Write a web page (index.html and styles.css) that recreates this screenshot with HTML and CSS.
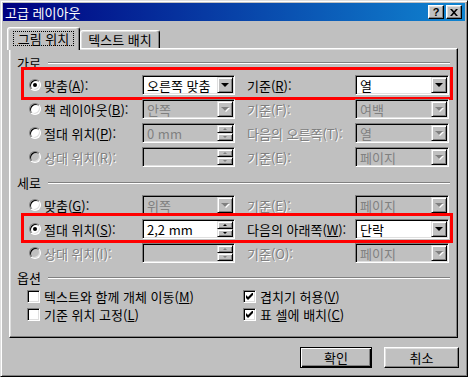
FILE: index.html
```html
<!DOCTYPE html>
<html lang="ko">
    <head>
        <meta charset="UTF-8">
        <title>고급 레이아웃</title>
        <link rel="stylesheet" href="styles.css">
    </head>
    <body>
        <div class="win">
            <div class="title">
                <span>고급 레이아웃</span>
                <div class="tbtns">
                    <div class="tbtn q">?</div>
                    <div class="tbtn">
                        <svg width="8" height="7" viewBox="0 0 8 7"><path d="M0 0h2l2 2.2L6 0h2L5 3.5 8 7H6L4 4.8 2 7H0l3-3.5z" fill="#000"/></svg>
                    </div>
                </div>
            </div>
            <div class="body">
                <div class="tabs">
                    <div class="tab on"><span class="focus">그림 위치</span></div>
                    <div class="tab">텍스트 배치</div>
                </div>
                <div class="panel">
                    <!-- 가로 -->
                    <div class="grp"><span>가로</span><i></i></div>
                    <div class="rows">
                        <div class="row hl hl1">
                            <div class="lbl"><span class="radio on"></span>맞춤(<u>A</u>):</div>
                            <div class="combo"><span class="val">오른쪽 맞춤</span><span class="drop"><b></b></span></div>
                            <div class="lbl2">기준(<u>R</u>):</div>
                            <div class="combo c2"><span class="val">열</span><span class="drop"><b></b></span></div>
                        </div>
                        <div class="row">
                            <div class="lbl"><span class="radio"></span>책 레이아웃(<u>B</u>):</div>
                            <div class="combo dis"><span class="val">안쪽</span><span class="drop"><b></b></span></div>
                            <div class="lbl2 gray">기준(F):</div>
                            <div class="combo c2 dis"><span class="val">여백</span><span class="drop"><b></b></span></div>
                        </div>
                        <div class="row">
                            <div class="lbl"><span class="radio"></span>절대 위치(<u>P</u>):</div>
                            <div class="combo dis"><span class="val">0 mm</span><span class="spin"><span class="up"><b></b></span><span class="dn"><b></b></span></span></div>
                            <div class="lbl2 gray">다음의 오른쪽(T):</div>
                            <div class="combo c2 dis"><span class="val">열</span><span class="drop"><b></b></span></div>
                        </div>
                        <div class="row">
                            <div class="lbl gray"><span class="radio dis"></span>상대 위치(R):</div>
                            <div class="combo dis"><span class="val"></span><span class="spin"><span class="up"><b></b></span><span class="dn"><b></b></span></span></div>
                            <div class="lbl2 gray">기준(E):</div>
                            <div class="combo c2 dis"><span class="val">페이지</span><span class="drop"><b></b></span></div>
                        </div>
                    </div>

                    <!-- 세로 -->
                    <div class="grp g2"><span>세로</span><i></i></div>
                    <div class="rows">
                        <div class="row">
                            <div class="lbl"><span class="radio"></span>맞춤(<u>G</u>):</div>
                            <div class="combo dis"><span class="val">위쪽</span><span class="drop"><b></b></span></div>
                            <div class="lbl2 gray">기준(E):</div>
                            <div class="combo c2 dis"><span class="val">페이지</span><span class="drop"><b></b></span></div>
                        </div>
                        <div class="row hl hl2">
                            <div class="lbl"><span class="radio on"></span>절대 위치(<u>S</u>):</div>
                            <div class="combo"><span class="val">2,2 mm</span><span class="spin"><span class="up"><b></b></span><span class="dn"><b></b></span></span></div>
                            <div class="lbl2">다음의 아래쪽(<u>W</u>):</div>
                            <div class="combo c2"><span class="val">단락</span><span class="drop"><b></b></span></div>
                        </div>
                        <div class="row">
                            <div class="lbl gray"><span class="radio dis"></span>상대 위치(I):</div>
                            <div class="combo dis"><span class="val"></span><span class="spin"><span class="up"><b></b></span><span class="dn"><b></b></span></span></div>
                            <div class="lbl2 gray">기준(O):</div>
                            <div class="combo c2 dis"><span class="val">페이지</span><span class="drop"><b></b></span></div>
                        </div>
                    </div>

                    <!-- 옵션 -->
                    <div class="grp g3"><span>옵션</span><i></i></div>
                    <div class="opts">
                        <div class="opt"><span class="chk"></span>텍스트와 함께 개체 이동(<u>M</u>)</div>
                        <div class="opt"><span class="chk on"><svg width="7" height="7" viewBox="0 0 7 7"><path d="M0 2v3l2 2 5-5V-1L2 4z" fill="#000"/></svg></span>겹치기 허용(<u>V</u>)</div>
                        <div class="opt"><span class="chk"></span>기준 위치 고정(<u>L</u>)</div>
                        <div class="opt"><span class="chk on"><svg width="7" height="7" viewBox="0 0 7 7"><path d="M0 2v3l2 2 5-5V-1L2 4z" fill="#000"/></svg></span>표 셀에 배치(<u>C</u>)</div>
                    </div>
                </div>
                <div class="btns">
                    <button class="btn def">확인</button>
                    <button class="btn">취소</button>
                </div>
            </div>
        </div>
    </body>
</html>
```

FILE: styles.css
```css
:root{
    --face: #c0c0c0;
    --shadow: #808080;
    --light: #dfdfdf;
}
*{
    margin: 0;
    padding: 0;
    box-sizing: border-box;
}
body{
    font: 13px/15px "Noto Sans CJK KR", "Liberation Sans", sans-serif;
    color: #000;
    background: var(--face);
}
u{text-decoration: underline; text-underline-offset: 1px;}

/* window frame */
.win{
    width: 468px; height: 377px;
    background: var(--face);
    border: 1px solid; border-color: var(--light) #000 #000 var(--light);
    box-shadow: inset 1px 1px #fff, inset -1px -1px var(--shadow);
    padding: 2px;
}
.title{
    height: 18px;
    background: linear-gradient(90deg, #000080, #1084d0);
    color: #fff;
    display: flex; align-items: center; justify-content: space-between;
    padding: 0 3px 0 2px;
}
.tbtns{display: flex; gap: 2px;}
.tbtn{
    width: 16px; height: 14px;
    background: var(--face);
    border: 1px solid; border-color: #fff #000 #000 #fff;
    box-shadow: inset -1px -1px var(--shadow), inset 1px 1px var(--light);
    display: flex; align-items: center; justify-content: center;
}
.tbtn.q{font: bold 11px/12px "Liberation Sans", sans-serif; color: #000;}

.body{padding: 6px 7px 0 6px;}

/* tabs */
.tabs{display: flex; align-items: flex-end; height: 21px; margin-left: -2px; position: relative; z-index: 1;}
.tab{
    width: 80px; height: 18px;
    border: 1px solid; border-bottom: none;
    border-color: #fff #000 transparent #fff;
    box-shadow: inset -1px 0 var(--shadow), inset 1px 1px var(--light);
    border-radius: 3px 3px 0 0;
    display: flex; align-items: center; justify-content: center;
    background: var(--face);
}
.tab.on{width: 73px; height: 23px; margin-bottom: -2px; padding-bottom: 2px;}
.focus{border: 1px dotted #000; padding: 0 4px; line-height: 13px;}

.panel{
    height: 290px;
    border: 1px solid; border-color: #fff #000 #000 #fff;
    box-shadow: inset -1px -1px var(--shadow), inset 1px 1px var(--light);
    padding: 6px 7px 0 7px;
}

/* group headers */
.grp{display: flex; align-items: center; height: 14px; margin-bottom: 4px;}
.grp i{flex: 1; height: 2px; border-top: 1px solid var(--shadow); border-bottom: 1px solid #fff; margin: 2px 0 0 7px;}
.g2{margin-top: 6px;}
.g3{margin-top: 5px; margin-bottom: 3px;}

/* rows */
.rows{padding-left: 12px; margin-right: 1px;}
.row{display: flex; align-items: center; height: 24px; position: relative;}
.lbl{width: 113px; display: flex; align-items: center; white-space: nowrap;}
.lbl2{width: 108px; margin-left: 12px; white-space: nowrap;}
.gray{color: var(--shadow); text-shadow: 1px 1px #fff;}

.hl::after{content: ''; position: absolute; border: 3px solid #f00; left: -8px; right: -4px; pointer-events: none;}
.hl1::after{top: -6px; bottom: -3px;}
.hl2::after{top: -4px; bottom: -2px;}

.radio{
    width: 12px; height: 12px; border-radius: 50%; flex: none;
    border: 1px solid; border-color: var(--shadow) #fff #fff var(--shadow);
    box-shadow: inset 1px 1px #000, inset -1px -1px var(--light);
    background: #fff; margin-right: 3px;
    display: flex; align-items: center; justify-content: center;
}
.radio.on::after{content: ''; width: 4px; height: 4px; border-radius: 50%; background: #000;}
.radio.dis{background: var(--face);}

/* combo / spin boxes */
.combo{
    width: 93px; height: 20px;
    border: 1px solid; border-color: var(--shadow) #fff #fff var(--shadow);
    box-shadow: inset 1px 1px #000, inset -1px -1px var(--light);
    background: #fff;
    padding: 1px;
    display: flex; align-items: center;
}
.combo.c2{width: 94px;}
.combo.dis{background: var(--face); color: var(--shadow);}
.val{flex: 1; padding-left: 3px; white-space: nowrap;}
.drop, .spin span{
    background: var(--face);
    border: 1px solid; border-color: var(--light) #000 #000 var(--light);
    box-shadow: inset 1px 1px #fff, inset -1px -1px var(--shadow);
    display: flex; align-items: center; justify-content: center;
}
.drop{width: 16px; height: 16px; flex: none;}
.drop b{width: 0; height: 0; border-left: 4px solid transparent; border-right: 4px solid transparent; border-top: 4px solid #000; margin-left: -1px;}
.spin{width: 16px; height: 16px; display: flex; flex-direction: column; flex: none;}
.spin span{height: 8px;}
.spin .up b{width: 0; height: 0; border-left: 2px solid transparent; border-right: 2px solid transparent; border-bottom: 2px solid #000;}
.spin .dn b{width: 0; height: 0; border-left: 2px solid transparent; border-right: 2px solid transparent; border-top: 2px solid #000;}
.dis .drop b{border-top-color: var(--shadow); filter: drop-shadow(1px 1px #fff);}
.dis .spin .up b{border-bottom-color: var(--shadow);}
.dis .spin .dn b{border-top-color: var(--shadow);}

/* options */
.opts{display: grid; grid-template-columns: 216px 1fr; padding-left: 10px;}
.opt{display: flex; align-items: center; height: 18px; white-space: nowrap;}
.chk{
    width: 13px; height: 13px; flex: none;
    border: 1px solid; border-color: var(--shadow) #fff #fff var(--shadow);
    box-shadow: inset 1px 1px #000, inset -1px -1px var(--light);
    background: #fff; margin-right: 4px;
    display: flex; align-items: center; justify-content: center;
}

/* buttons */
.btns{display: flex; justify-content: flex-end; gap: 12px; margin-top: 9px; margin-right: -1px;}
.btn{
    width: 75px; height: 21px;
    font: inherit; color: #000;
    background: var(--face);
    border: 1px solid; border-color: #fff #000 #000 #fff;
    box-shadow: inset -1px -1px var(--shadow), inset 1px 1px var(--light);
}
.btn.def{width: 72px; border-color: #000; box-shadow: inset 1px 1px #fff, inset -1px -1px #000, inset -2px -2px var(--shadow);}
```
